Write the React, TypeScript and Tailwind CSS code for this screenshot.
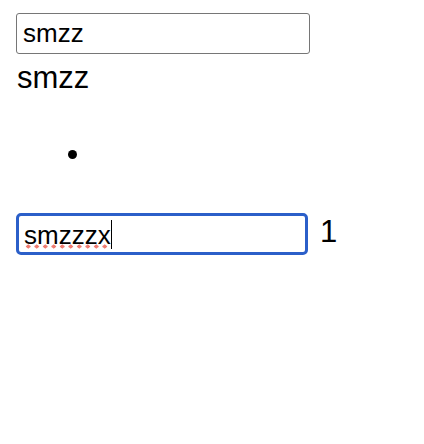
export default function App() {
  return (
    <div className="pl-4 pt-[13px] font-['Liberation_Sans',Arial,sans-serif] text-black">
      {/* first field */}
      <input
        defaultValue="smzz"
        spellCheck={false}
        className="block w-[294px] h-[41px] border border-[#767676] rounded-[3px] px-[6px] text-[26px] outline-none"
      />
      <p className="mt-[6px] text-[31px] leading-[36px] ml-[1px]">smzz</p>

      {/* list marker */}
      <div className="mt-[54px] ml-[52px] w-[9px] h-[9px] rounded-full bg-black" />

      {/* focused field */}
      <div className="mt-[54px] flex items-start">
        <div className="w-[292px] h-[42px] border-[3px] border-[#2b5fc9] rounded-[5px] flex items-center pl-[5px]">
          <div className="relative flex items-center text-[26px] leading-[30px] pt-[1px]">
            <span>smzzzx</span>
            <span className="w-px h-[29px] bg-black" />
            <span className="absolute left-0 right-[1px] top-[25px] h-[5px] bg-[radial-gradient(circle,#ef7b70_1.9px,transparent_2.2px)] bg-[length:8.5px_5px]" />
          </div>
        </div>
        <span className="ml-[12px] mt-[1px] text-[31px] leading-[36px]">1</span>
      </div>
    </div>
  )
}
